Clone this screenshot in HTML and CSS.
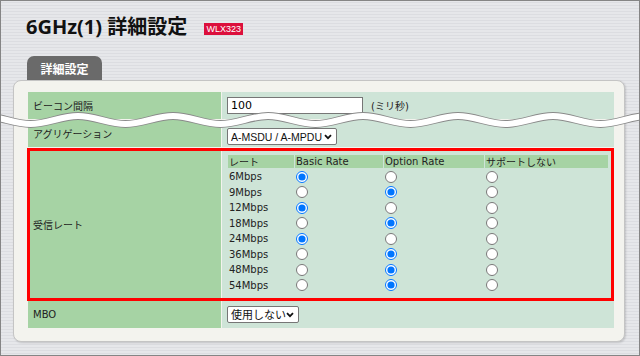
FILE: index.html
```html
<!DOCTYPE html>
<html>
<head>
  <title>6GHz(1) 詳細設定</title>
  <link rel="stylesheet" href="styles.css">
</head>
<body>
  <div class="page-title">
    <h1>6GHz(1) 詳細設定</h1>
    <span class="model">WLX323</span>
  </div>

  <div class="tab">詳細設定</div>

  <div class="panel">
    <div class="settings">
      <div class="row">
        <div class="label">ビーコン間隔</div>
        <div class="value">
          <input type="text" class="text-input" value="100">
          <span class="unit">(ミリ秒)</span>
        </div>
      </div>
      <div class="row">
        <div class="label">アグリゲーション</div>
        <div class="value">
          <select class="select-agg">
            <option>A-MSDU / A-MPDU</option>
          </select>
        </div>
      </div>
      <div class="row highlight">
        <div class="label">受信レート</div>
        <div class="value rates-cell">
          <div class="rates">
            <div class="rate-head">レート</div>
            <div class="rate-head">Basic Rate</div>
            <div class="rate-head">Option Rate</div>
            <div class="rate-head">サポートしない</div>

            <div>6Mbps</div>
            <div><input type="radio" name="r6" checked></div>
            <div><input type="radio" name="r6"></div>
            <div><input type="radio" name="r6"></div>

            <div>9Mbps</div>
            <div><input type="radio" name="r9"></div>
            <div><input type="radio" name="r9" checked></div>
            <div><input type="radio" name="r9"></div>

            <div>12Mbps</div>
            <div><input type="radio" name="r12" checked></div>
            <div><input type="radio" name="r12"></div>
            <div><input type="radio" name="r12"></div>

            <div>18Mbps</div>
            <div><input type="radio" name="r18"></div>
            <div><input type="radio" name="r18" checked></div>
            <div><input type="radio" name="r18"></div>

            <div>24Mbps</div>
            <div><input type="radio" name="r24" checked></div>
            <div><input type="radio" name="r24"></div>
            <div><input type="radio" name="r24"></div>

            <div>36Mbps</div>
            <div><input type="radio" name="r36"></div>
            <div><input type="radio" name="r36" checked></div>
            <div><input type="radio" name="r36"></div>

            <div>48Mbps</div>
            <div><input type="radio" name="r48"></div>
            <div><input type="radio" name="r48" checked></div>
            <div><input type="radio" name="r48"></div>

            <div>54Mbps</div>
            <div><input type="radio" name="r54"></div>
            <div><input type="radio" name="r54" checked></div>
            <div><input type="radio" name="r54"></div>
          </div>
        </div>
      </div>
      <div class="row">
        <div class="label">MBO</div>
        <div class="value">
          <select class="select-mbo">
            <option>使用しない</option>
          </select>
        </div>
      </div>
    </div>
  </div>

  <!-- cut mark drawn over the page -->
  <svg class="cut" viewBox="0 104 640 28" width="640" height="28">
    <path d="M -17 116 C 0 116 13.5 124 30.5 124 S 61 116 78 116 S 108.5 124 125.5 124 S 156 116 173 116 S 203.5 124 220.5 124 S 251 116 268 116 S 298.5 124 315.5 124 S 346 116 363 116 S 393.5 124 410.5 124 S 441 116 458 116 S 488.5 124 505.5 124 S 536 116 553 116 S 583.5 124 600.5 124 S 631 116 648 116" fill="none" stroke="#8a8a8a" stroke-width="8"/>
    <path d="M -17 116 C 0 116 13.5 124 30.5 124 S 61 116 78 116 S 108.5 124 125.5 124 S 156 116 173 116 S 203.5 124 220.5 124 S 251 116 268 116 S 298.5 124 315.5 124 S 346 116 363 116 S 393.5 124 410.5 124 S 441 116 458 116 S 488.5 124 505.5 124 S 536 116 553 116 S 583.5 124 600.5 124 S 631 116 648 116" fill="none" stroke="#ffffff" stroke-width="6"/>
  </svg>
</body>
</html>
```

FILE: styles.css
```css
* {
  box-sizing: border-box;
}
body {
  margin: 0;
  width: 640px;
  height: 356px;
  position: relative;
  overflow: hidden;
  border: 1px solid #858585;
  font-family: 'DejaVu Sans', 'Noto Sans CJK JP', sans-serif;
  font-size: 10px;
  color: #222;
  background: repeating-linear-gradient(180deg, #e6e7ea 0px, #e6e7ea 2px, #dcdde1 2px, #dcdde1 3px);
}
.page-title {
  display: flex;
  align-items: center;
  padding: 13px 0 0 25px;
  height: 39px;
}
h1 {
  margin: 0;
  font-family: 'Noto Sans', 'Noto Sans CJK JP', sans-serif;
  font-size: 20px;
  font-weight: bold;
  line-height: 26px;
  color: #111;
}
.model {
  margin-left: 17px;
  background: #dc0f3c;
  color: #fff;
  font-family: 'Liberation Sans', sans-serif;
  font-size: 9px;
  line-height: 12px;
  height: 12px;
  width: 39px;
  text-align: center;
  margin-top: 4px;
}
.tab {
  margin: 16px 0 0 26px;
  width: 75px;
  height: 24px;
  background: #6a6a6a;
  color: #fff;
  border-radius: 7px 7px 0 0;
  font-family: 'Noto Sans CJK JP', sans-serif;
  font-weight: bold;
  font-size: 12px;
  text-align: center;
  line-height: 25px;
}
.panel {
  margin-left: 12px;
  width: 612px;
  height: 262px;
  background: #f3f3ee;
  border: 1px solid #c4c4c4;
  border-radius: 8px;
  box-shadow: 1px 1px 2px rgba(0, 0, 0, 0.15);
  padding: 11px 10px 13px 14px;
}
.settings {
  display: flex;
  flex-direction: column;
  gap: 1px;
}
.row {
  display: grid;
  grid-template-columns: 193px 1fr;
  column-gap: 1px;
  min-height: 27px;
  position: relative;
}
.label {
  background: #a6d3a4;
  padding-left: 5px;
  display: flex;
  align-items: center;
}
.value {
  background: #cee4d7;
  padding-left: 5px;
  display: flex;
  align-items: center;
}
.text-input {
  width: 136px;
  height: 17px;
  border: 1px solid #767676;
  padding: 0 3px;
  font: inherit;
  font-size: 11px;
  margin: 0;
  background: #fff;
}
.unit {
  margin-left: 8px;
}
select {
  appearance: none;
  height: 17px;
  font-family: 'Liberation Sans', 'Noto Sans CJK JP', sans-serif;
  font-size: 10.5px;
  color: #111;
  border: 1px solid #767676;
  border-radius: 2px;
  padding: 0 12px 0 3px;
  margin: 0;
  background: #fff url("data:image/svg+xml;utf8,<svg xmlns='http://www.w3.org/2000/svg' width='8' height='6' viewBox='0 0 8 6'><path d='M1 1.2 L4 4.2 L7 1.2' fill='none' stroke='%23111' stroke-width='1.8'/></svg>") no-repeat right 4px center;
}
.select-agg {
  width: 110px;
  margin-top: 6px;
}
.select-mbo {
  width: 72px;
  font-size: 11px;
}
.highlight {
  height: 152px;
}
.highlight:after {
  content: '';
  position: absolute;
  top: 0;
  left: -1px;
  right: 0;
  bottom: -1px;
  border: 3px solid #ff0000;
  pointer-events: none;
}
.rates-cell {
  padding: 7px 0 0 6px;
  align-items: flex-start;
}
.rates {
  display: grid;
  grid-template-columns: 66px 88px 100px 123px;
  grid-template-rows: 14px repeat(8, 15.5px);
  column-gap: 1px;
  row-gap: 0;
}
.rates > div {
  display: flex;
  align-items: center;
  padding-left: 1px;
}
.rates .rate-head {
  background: #a6d3a4;
  margin-bottom: 1px;
}
.rates input[type="radio"] {
  width: 12px;
  height: 12px;
  margin: 0;
}
.cut {
  position: absolute;
  left: -1px;
  top: 103px;
}
```
